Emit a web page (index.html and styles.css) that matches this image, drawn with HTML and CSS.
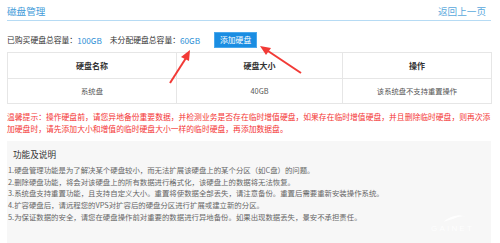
FILE: index.html
```html
<!DOCTYPE html>
<html lang="zh-CN">
<head>
<meta charset="utf-8">
<title>磁盘管理</title>
<link rel="stylesheet" href="styles.css">
</head>
<body>
<div class="page">
  <div class="head">
    <span class="title">磁盘管理</span>
    <a class="back">返回上一页</a>
  </div>
  <div class="info">
    <span class="label">已购买硬盘总容量：</span><span class="num">100GB</span>
    <span class="label second">未分配硬盘总容量：</span><span class="num">60GB</span>
    <button class="btn">添加硬盘</button>
  </div>
  <table class="grid">
    <thead>
      <tr><th class="c1">硬盘名称</th><th class="c2">硬盘大小</th><th class="c3">操作</th></tr>
    </thead>
    <tbody>
      <tr><td>系统盘</td><td>40GB</td><td>该系统盘不支持重置操作</td></tr>
    </tbody>
  </table>
  <p class="warn">温馨提示：操作硬盘前，请您异地备份重要数据，并检测业务是否存在临时增值硬盘，如果存在临时增值硬盘，并且删除临时硬盘，则再次添加硬盘时，请先添加大小和增值的临时硬盘大小一样的临时硬盘，再添加数据盘。</p>
  <div class="box">
    <h3 class="box-title">功能及说明</h3>
    <ul class="notes">
      <li>1.硬盘管理功能是为了解决某个硬盘较小，而无法扩展该硬盘上的某个分区（如C盘）的问题。</li>
      <li>2.删除硬盘功能，将会对该硬盘上的所有数据进行格式化，该硬盘上的数据将无法恢复。</li>
      <li>3.系统盘支持重置功能，且支持自定义大小。重置将使数据全部丢失，请注意备份。重置后需要重新安装操作系统。</li>
      <li>4.扩容硬盘后，请远程您的VPS对扩容后的硬盘分区进行扩展或建立新的分区。</li>
      <li>5.为保证数据的安全，请您在硬盘操作前对重要的数据进行异地备份。如果出现数据丢失，景安不承担责任。</li>
    </ul>
    <svg class="logo" width="60" height="22" viewBox="0 0 60 22">
      <path d="M14 11 Q26 1 38 6 Q32 4 24 8 Z" fill="#ffffff"/>
      <text x="2" y="20" font-family="Liberation Sans, sans-serif" font-size="8" letter-spacing="2.2" fill="#ffffff">GAINET</text>
    </svg>
  </div>
  <svg class="arrows" width="500" height="243" viewBox="0 0 500 243">
    <g fill="#f23a36" stroke="#f23a36">
      <line x1="170" y1="83" x2="186" y2="58" stroke-width="2"/>
      <polygon points="190,50 181,57 189,61" stroke="none"/>
      <line x1="301" y1="73" x2="268" y2="51" stroke-width="2"/>
      <polygon points="260,46 266,55 271,48" stroke="none"/>
    </g>
  </svg>
</div>
</body>
</html>
```
FILE: styles.css
```css
* { box-sizing: border-box; }
html, body { margin: 0; padding: 0; background: #ffffff; }
body {
  font-family: "Noto Sans CJK SC", "Noto Sans", sans-serif;
  color: #333333;
  width: 500px;
  height: 243px;
  overflow: hidden;
}
.page {
  position: relative;
  padding: 0 9px 0 7px;
  height: 243px;
}
.head {
  display: flex;
  justify-content: space-between;
  align-items: center;
  height: 21px;
  border-bottom: 1px solid #b6dbf4;
  padding-top: 1px;
}
.title {
  font-size: 9.6px;
  color: #3f9bd9;
  line-height: 18px;
}
.back {
  font-size: 9.6px;
  color: #5aa8dc;
  line-height: 18px;
  margin-right: 5px;
}
.info {
  display: flex;
  align-items: center;
  height: 16px;
  margin-top: 11px;
  font-size: 7.8px;
  line-height: 16px;
}
.label { color: #333333; }
.label.second { margin-left: 8px; }
.num { color: #2d8fd6; font-size: 8.2px; }
.btn {
  margin-left: 14px;
  height: 16px;
  width: 43px;
  padding: 0;
  border: 1px solid #4aa8ec;
  background: #1a8de2;
  color: #ffffff;
  font-family: inherit;
  font-size: 7.8px;
  line-height: 14px;
}
.grid {
  margin-top: 4px;
  width: 484px;
  border-collapse: collapse;
  table-layout: fixed;
}
.grid th, .grid td {
  border: 1px solid #e6e6e6;
  text-align: center;
  padding: 0;
}
.grid th {
  height: 26px;
  font-size: 8px;
  font-weight: bold;
  color: #333333;
}
.grid td {
  height: 25px;
  font-size: 7.3px;
  color: #555555;
}
.c1 { width: 169px; }
.c2 { width: 166px; }
.c3 { width: 149px; }
.warn {
  margin: 7px 0 0 0;
  font-size: 7.8px;
  line-height: 12px;
  color: #f43535;
}
.box {
  position: relative;
  margin-top: 6px;
  background: #f7f7f7;
  width: 484px;
  height: 110px;
  padding: 7px 0 0 0;
}
.box-title {
  margin: 0;
  padding-left: 6px;
  font-size: 8.6px;
  font-weight: normal;
  line-height: 12px;
  color: #333333;
}
.notes {
  list-style: none;
  margin: 4px 0 0 0;
  padding: 0 0 0 1px;
  font-size: 7.4px;
  line-height: 11.7px;
  color: #666666;
}
.logo {
  position: absolute;
  right: 2px;
  top: 70px;
  opacity: 0.9;
}
.arrows {
  position: absolute;
  left: 0;
  top: 0;
  pointer-events: none;
}
```
